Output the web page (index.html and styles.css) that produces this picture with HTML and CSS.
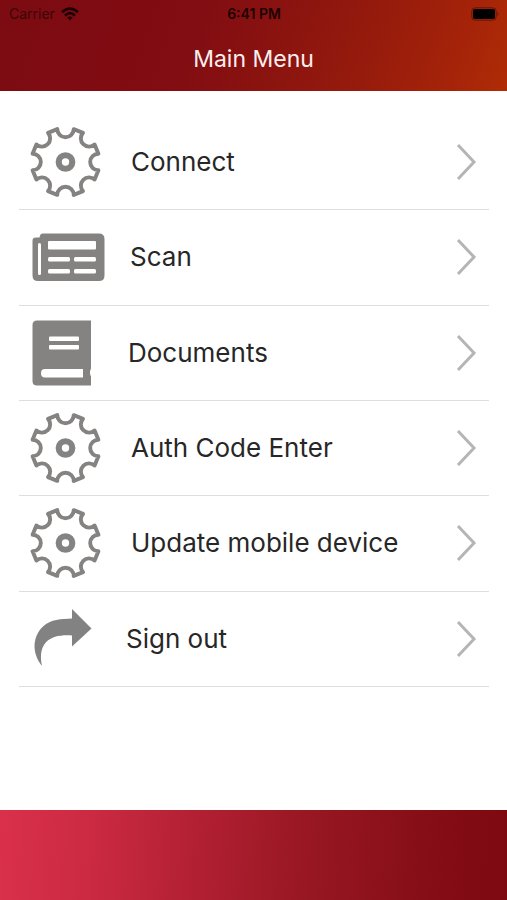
FILE: index.html
```html
<!DOCTYPE html>
<html lang="en">
<head>
<meta charset="utf-8">
<meta name="viewport" content="width=device-width, initial-scale=1">
<title>Main Menu</title>
<link rel="stylesheet" href="styles.css">
</head>
<body>
<svg class="defs" aria-hidden="true">
  <symbol id="gear" viewBox="-35 -35 70 70">
    <g fill="none" stroke="#858382" stroke-linejoin="round">
      <path stroke-width="3.8" d="M-8-32A8 8 0 0 0 8-32L17-28.3A8 8 0 0 0 28.3-17L32-8A8 8 0 0 0 32 8L28.3 17A8 8 0 0 0 17 28.3L8 32A8 8 0 0 0-8 32L-17 28.3A8 8 0 0 0-28.3 17L-32 8A8 8 0 0 0-32-8L-28.3-17A8 8 0 0 0-17-28.3Z"/>
      <circle r="6.6" stroke-width="6"/>
    </g>
  </symbol>
  <symbol id="chevron" viewBox="0 0 22 40">
    <path d="M3 3 19 20 3 37" fill="none" stroke="#b5b5b5" stroke-width="3"/>
  </symbol>
</svg>
<header class="header">
  <div class="status">
    <span class="carrier">Carrier
      <svg class="wifi" viewBox="0 0 18 14"><g fill="none" stroke="#1c0203" stroke-width="2.6"><path d="M1 5.2Q9-2 17 5.2"/><path d="M4 8.4Q9 4 14 8.4"/></g><path d="M9 13.4 6.2 10.5Q9 8.4 11.8 10.5Z" fill="#1c0203"/></svg>
    </span>
    <span class="time">6:41 PM</span>
    <svg class="battery" viewBox="0 0 28 14"><rect x=".8" y=".8" width="24.4" height="12.4" rx="3.5" fill="none" stroke="#641308"/><rect x="2" y="2" width="22" height="10" rx="2" fill="#000"/><path d="M26.5 5Q28.5 7 26.5 9Z" fill="#641308"/></svg>
  </div>
  <h1 class="title">Main Menu</h1>
</header>
<main class="main">
  <nav class="menu">
    <a class="item" href="#connect"><svg class="icon gear"><use href="#gear"/></svg><span class="label">Connect</span><svg class="chevron"><use href="#chevron"/></svg></a>
    <a class="item" href="#scan"><svg class="icon scan" viewBox="0 0 72 72"><path fill="#858382" d="M14 12.500H70Q75.500 12.500 75.500 18V54.500Q75.500 60 70 60H9Q3.500 60 3.500 54.500V19.500Q3.500 16.500 7 16.500H10.500Q11 12.500 14 12.500Z"/><g fill="#fff"><rect x="9" y="22" width="3" height="32" rx="1.500"/><rect x="19" y="20" width="48" height="8.500" rx="1"/><rect x="19" y="36" width="22" height="4.500" rx="1.500"/><rect x="45" y="36" width="22" height="4.500" rx="1.500"/><rect x="19" y="48" width="22" height="4.500" rx="1.500"/><rect x="45" y="48" width="22" height="4.500" rx="1.500"/></g></svg><span class="label">Scan</span><svg class="chevron"><use href="#chevron"/></svg></a>
    <a class="item" href="#documents"><svg class="icon book" viewBox="-1 0 70 72"><path fill="#858382" d="M7 3.500H61V51.500Q59 55.500 61 59.500V68.500H7Q2.500 68.500 2.500 64V8Q2.500 3.500 7 3.500Z"/><g fill="#fff"><rect x="19" y="19.500" width="30" height="4.500" rx="1"/><rect x="19" y="28" width="30" height="4.500" rx="1"/><path d="M15 52H53V60.500H15Q11 60.500 11 56.200 11 52 15 52Z"/></g></svg><span class="label">Documents</span><svg class="chevron"><use href="#chevron"/></svg></a>
    <a class="item" href="#auth"><svg class="icon gear"><use href="#gear"/></svg><span class="label">Auth Code Enter</span><svg class="chevron"><use href="#chevron"/></svg></a>
    <a class="item" href="#update"><svg class="icon gear"><use href="#gear"/></svg><span class="label">Update mobile device</span><svg class="chevron"><use href="#chevron"/></svg></a>
    <a class="item" href="#signout"><svg class="icon arrow" viewBox="-1 0 68 72"><path fill="#828282" d="M42 6 61.500 25.500 42 43.500V32.500C22 31 7 38 12 63C1 49 3 33 13 23.500C21 16 31 16 42 15.500Z"/></svg><span class="label">Sign out</span><svg class="chevron"><use href="#chevron"/></svg></a>
  </nav>
</main>
<footer class="footer"></footer>
</body>
</html>
```
FILE: styles.css
```css
* {
  box-sizing: border-box;
}

body {
  margin: 0;
  min-height: 100vh;
  display: flex;
  flex-direction: column;
  background: #fff;
  font-family: Inter, "Liberation Sans", sans-serif;
}

.defs {
  display: none;
}

.header {
  height: 91px;
  background: linear-gradient(110deg, #7c0b12 0%, #820d12 38%, #8f170e 63%, #a32209 87%, #b02c06 100%);
}

.status {
  display: grid;
  grid-template-columns: 1fr auto 1fr;
  align-items: center;
  height: 27px;
  padding: 0 8px 0 9px;
  font-size: 14px;
  color: #1c0203;
}

.carrier {
  display: flex;
  align-items: center;
  gap: 6px;
  color: #3c0508;
}

.wifi {
  width: 18px;
  height: 14px;
}

.time {
  font-weight: 600;
}

.battery {
  justify-self: end;
  width: 28px;
  height: 14px;
}

.title {
  margin: 16px 0 0;
  text-align: center;
  font-size: 23px;
  line-height: 32px;
  font-weight: 400;
  color: #fdeeee;
}

.main {
  flex: 1;
  display: flex;
  padding: 24px 18px 123px 19px;
}

.menu {
  flex: 1;
  display: grid;
  grid-template-rows: repeat(6, 1fr);
}

.item {
  display: flex;
  align-items: center;
  gap: 29px;
  padding: 0 12px 0 10px;
  border-bottom: 1px solid #dedede;
  color: #272727;
  text-decoration: none;
}

.icon {
  flex: none;
  height: 72px;
  overflow: visible;
}

.gear {
  width: 73px;
}

.scan {
  width: 72px;
}

.book {
  width: 70px;
}

.arrow {
  width: 68px;
}

.label {
  flex: 1;
  font-size: 26px;
  line-height: 32px;
}

.chevron {
  flex: none;
  width: 22px;
  height: 40px;
}

.footer {
  height: 90px;
  background: linear-gradient(93deg, #da304b 0%, #cb2a42 18%, #b32034 38%, #981722 60%, #860e17 83%, #7e0910 100%);
}
```
